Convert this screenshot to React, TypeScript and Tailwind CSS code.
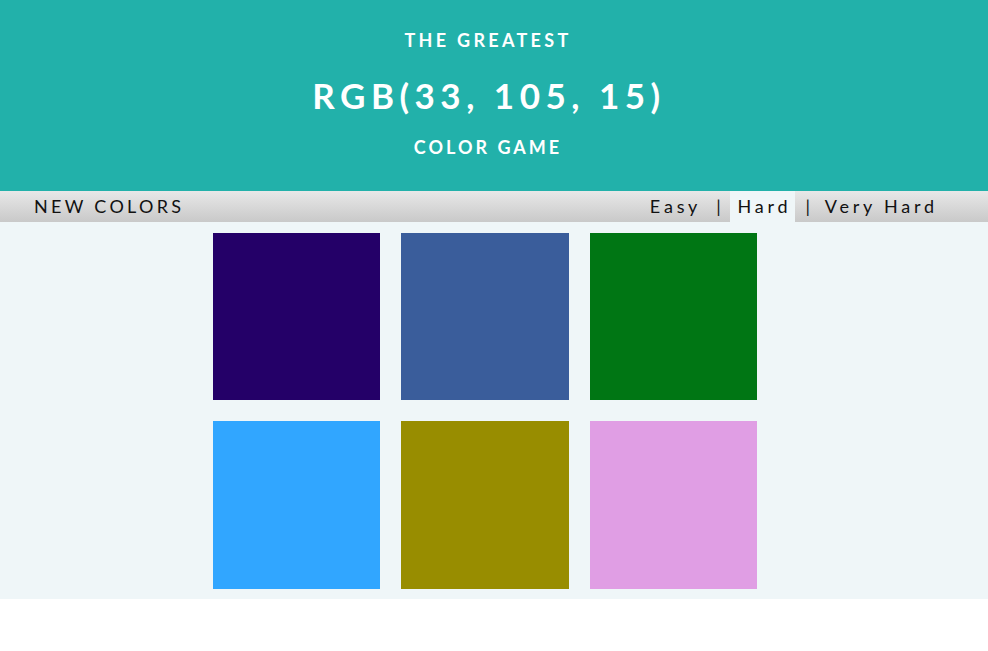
import React from "react";

const colors = ["#240068", "#3a5d9b", "#007614", "#31a6ff", "#988d00", "#e09ee4"];

export default function App() {
  return (
    <div className="w-[988px] h-[651px] bg-white font-['Lato',sans-serif]">
      <header className="h-[191px] bg-[#22b1aa] text-white flex flex-col items-center pr-[15px]">
        <div className="mt-[29px] text-[18px] font-bold tracking-[3.3px] leading-[22px] pl-[3px]">THE GREATEST</div>
        <div className="mt-[22px] text-[35px] font-bold tracking-[5.5px] leading-[44px] pl-[5px]">RGB(33, 105, 15)</div>
        <div className="mt-[19px] text-[18px] font-bold tracking-[3px] leading-[22px] pl-[3px]">COLOR GAME</div>
      </header>
      <nav className="h-[31px] bg-gradient-to-b from-[#e8e8e8] to-[#c9c9c9] flex items-stretch text-[#111] text-[18px]">
        <div className="pl-[34px] flex items-center tracking-[3.3px]">NEW COLORS</div>
        <div className="ml-auto flex items-stretch pr-[50px] tracking-[3.8px]">
          <div className="flex items-center">Easy</div>
          <div className="flex items-center pl-[15px] pr-[5px]">|</div>
          <div className="flex items-center pl-[8px] pr-[4px] bg-[#eff6f8]">Hard</div>
          <div className="flex items-center pl-[10px] pr-[11px]">|</div>
          <div className="flex items-center">Very Hard</div>
        </div>
      </nav>
      <main className="bg-[#eff6f8] pt-[11px] pb-[10px] pl-[213px]">
        <div className="grid grid-cols-[167px_168px_167px] grid-rows-[167px_168px] gap-x-[21px] gap-y-[21px] w-fit">
          {colors.map((c, i) => (
            <div key={i} style={{ backgroundColor: c }} />
          ))}
        </div>
      </main>
    </div>
  );
}
